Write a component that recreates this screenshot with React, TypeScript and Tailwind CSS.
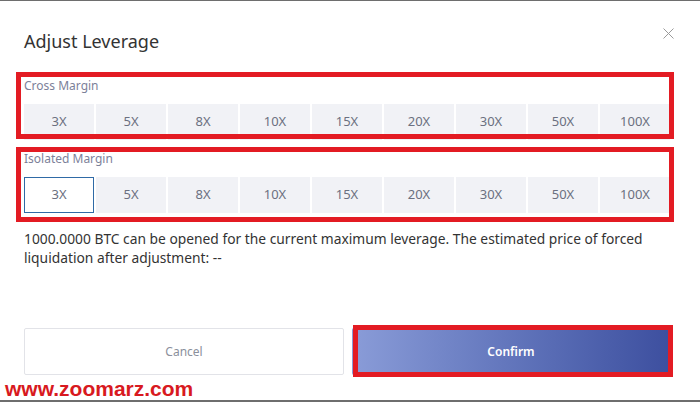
const crossLevels = ["3X", "5X", "8X", "10X", "15X", "20X", "30X", "50X", "100X"];

const LeverageRow = ({ label, selected }: { label: string; selected?: string }) => {
  return (
    <div>
      <div className="text-[12px] leading-4 text-[#7c8199]">{label}</div>
      <div className="grid grid-cols-9 gap-[2px] mt-[10px]">
        {crossLevels.map((lv) => (
          <div
            key={lv}
            className={
              lv === selected
                ? "h-[36px] flex items-center justify-center text-[13px] text-[#6b7080] bg-white border border-[#2f6aa6]"
                : "h-[36px] flex items-center justify-center text-[13px] text-[#6b7080] bg-[#f1f2f6]"
            }
          >
            {lv}
          </div>
        ))}
      </div>
    </div>
  );
};

export default function App() {
  return (
    <div
      className="relative w-[700px] h-[402px] bg-[#6e6e6e] pt-px overflow-hidden"
      style={{ fontFamily: '"Noto Sans", "Open Sans", sans-serif' }}
    >
      <div className="bg-white h-[399px] pl-6 pr-[30px] pt-[28px] pb-[25px] flex flex-col">
        {/* header */}
        <div className="flex items-start justify-between">
          <h2 className="text-[18px] leading-6 text-[#333]">Adjust Leverage</h2>
          <button className="mt-[-1px] mr-[-4px] p-0">
            <svg width="11" height="11" viewBox="0 0 11 11" fill="none">
              <path d="M0.5 0.5L10.5 10.5M10.5 0.5L0.5 10.5" stroke="#9a9a9a" strokeWidth="1" />
            </svg>
          </button>
        </div>

        <div className="mt-[25px]">
          <LeverageRow label="Cross Margin" />
        </div>
        <div className="mt-[11px]">
          <LeverageRow label="Isolated Margin" selected="3X" />
        </div>

        <p className="mt-[16px] text-[13.8px] leading-[19px] text-[#333]">
          1000.0000 BTC can be opened for the current maximum leverage. The estimated price of forced
          liquidation after adjustment: --
        </p>

        {/* actions */}
        <div className="mt-auto flex gap-2">
          <button className="flex-1 h-[47px] rounded-[2px] border border-[#e2e3e8] bg-white text-[12px] text-[#8b909c]">
            Cancel
          </button>
          <button className="flex-1 h-[47px] rounded-[2px] bg-gradient-to-r from-[#8a9cd8] to-[#3d4f9f] text-[12px] font-semibold text-white">
            Confirm
          </button>
        </div>
      </div>

      {/* red annotation boxes */}
      <div className="absolute left-[16px] top-[72px] w-[658px] h-[67px] border-[5px] border-[#e31b23]" />
      <div className="absolute left-[16px] top-[147px] w-[658px] h-[75px] border-[5px] border-[#e31b23]" />
      <div className="absolute left-[353px] top-[325px] w-[320px] h-[52px] border-[5px] border-[#e31b23]" />

      {/* watermark */}
      <div
        className="absolute left-[5px] top-[377px] text-[21px] leading-6 font-bold text-[#d81920]"
        style={{ fontFamily: '"Liberation Sans", Arial, sans-serif' }}
      >
        www.zoomarz.com
      </div>
    </div>
  );
}
